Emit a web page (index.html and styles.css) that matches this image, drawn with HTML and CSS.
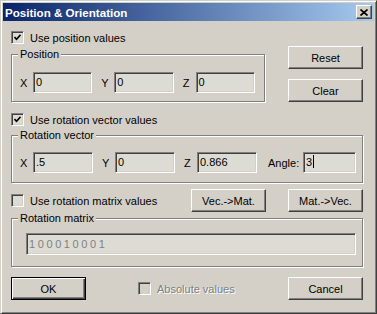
FILE: index.html
```html
<!DOCTYPE html>
<html lang="en">
  <head>
    <meta charset="UTF-8" />
    <title>Position &amp; Orientation</title>
    <link rel="stylesheet" href="styles.css">
  </head>
  <body>
    <div class="window">
      <div class="titlebar">
        <span class="title">Position &amp; Orientation</span>
        <span class="close-btn">
          <svg width="8" height="7" viewBox="0 0 8 7"><path d="M0.5 0.5 L7.5 6.5 M7.5 0.5 L0.5 6.5" stroke="#000" stroke-width="1.7" fill="none"/></svg>
        </span>
      </div>
      <div class="content">
        <div class="top-section">
          <div class="left-col">
            <label class="check">
              <span class="box"><svg width="7" height="7" viewBox="0 0 7 7"><path d="M0.5 3 L2.5 5.2 L6.5 0.8" stroke="#000" stroke-width="1.6" fill="none"/></svg></span>
              Use position values
            </label>
            <div class="group group-pos">
              <span class="legend">Position</span>
              <div class="fields">
                <span class="axis">X</span><span class="field">0</span>
                <span class="axis">Y</span><span class="field">0</span>
                <span class="axis">Z</span><span class="field">0</span>
              </div>
            </div>
          </div>
          <div class="right-col">
            <button class="btn">Reset</button>
            <button class="btn">Clear</button>
          </div>
        </div>

        <label class="check check-vec">
          <span class="box"><svg width="7" height="7" viewBox="0 0 7 7"><path d="M0.5 3 L2.5 5.2 L6.5 0.8" stroke="#000" stroke-width="1.6" fill="none"/></svg></span>
          Use rotation vector values
        </label>
        <div class="group group-vec">
          <span class="legend">Rotation vector</span>
          <div class="fields">
            <span class="axis">X</span><span class="field">.5</span>
            <span class="axis">Y</span><span class="field">0</span>
            <span class="axis">Z</span><span class="field">0.866</span>
            <span class="axis angle">Angle:</span><span class="field field-angle">3<span class="caret"></span></span>
          </div>
        </div>

        <div class="mat-row">
          <label class="check">
            <span class="box"></span>
            Use rotation matrix values
          </label>
          <button class="btn">Vec.-&gt;Mat.</button>
          <button class="btn btn-gap">Mat.-&gt;Vec.</button>
        </div>
        <div class="group group-mat">
          <span class="legend">Rotation matrix</span>
          <div class="field field-mat">100010001</div>
        </div>

        <div class="footer">
          <button class="btn btn-default">OK</button>
          <label class="check disabled">
            <span class="box"></span>
            Absolute values
          </label>
          <button class="btn btn-cancel">Cancel</button>
        </div>
      </div>
    </div>
  </body>
</html>
```

FILE: styles.css
```css
* {
  box-sizing: border-box;
}
body {
  margin: 0;
  background: #d4d0c8;
  font-family: "Liberation Sans", Arial, sans-serif;
  font-size: 11px;
  color: #000;
}
.window {
  width: 377px;
  height: 314px;
  padding: 2px;
  background: #d4d0c8;
  border: 1px solid;
  border-color: #d4d0c8 #404040 #404040 #d4d0c8;
  box-shadow: inset 1px 1px #fff, inset -1px -1px #808080;
}
.titlebar {
  height: 18px;
  display: flex;
  align-items: center;
  justify-content: space-between;
  padding: 0 2px;
  background: linear-gradient(to right, #0a246a, #a6caf0);
  color: #fff;
  font-weight: bold;
}
.title {
  font-size: 11.6px;
}
.close-btn {
  width: 16px;
  height: 14px;
  display: flex;
  align-items: center;
  justify-content: center;
  background: #d4d0c8;
  border: 1px solid;
  border-color: #fff #404040 #404040 #fff;
  box-shadow: inset -1px -1px #808080;
}
.content {
  padding: 10px 0 0 8px;
  width: 360px;
}
.top-section {
  display: flex;
  justify-content: space-between;
  align-items: flex-start;
  width: 352px;
}
.left-col {
  width: 254px;
}
.right-col {
  display: flex;
  flex-direction: column;
  gap: 10px;
  padding-top: 15px;
}
.btn {
  width: 75px;
  height: 23px;
  padding: 0;
  font: inherit;
  color: #000;
  background: #d4d0c8;
  border: 1px solid;
  border-color: #fff #404040 #404040 #fff;
  box-shadow: inset -1px -1px #808080;
}
.btn-default {
  border-color: #000;
  box-shadow: inset 1px 1px #fff, inset -1px -1px #404040, inset -2px -2px #808080;
}
.check {
  display: flex;
  align-items: center;
  height: 13px;
  white-space: nowrap;
}
.box {
  width: 13px;
  height: 13px;
  margin-right: 6px;
  display: flex;
  align-items: center;
  justify-content: center;
  background: #dcdcd4;
  border: 1px solid;
  border-color: #808080 #fff #fff #808080;
  box-shadow: inset 1px 1px #404040, inset -1px -1px #d4d0c8;
}
.disabled {
  color: #808080;
  text-shadow: 1px 1px #fff;
}
.disabled .box {
  background: #d4d0c8;
}
.group {
  position: relative;
  width: 352px;
  border: 1px solid #808080;
  box-shadow: inset 1px 1px #fff, 1px 1px #fff;
}
.legend {
  position: absolute;
  top: -7px;
  left: 6px;
  padding: 0 2px;
  line-height: 13px;
  background: #d4d0c8;
}
.group-pos {
  width: 254px;
  height: 48px;
  margin-top: 10px;
  padding: 17px 0 0 8px;
}
.check-vec {
  margin-top: 11px;
}
.group-vec {
  height: 48px;
  margin-top: 9px;
  padding: 16px 0 0 8px;
}
.fields {
  display: flex;
  align-items: center;
}
.axis {
  width: 13px;
}
.axis.angle {
  width: 35px;
  margin-left: 2px;
}
.field {
  width: 60px;
  height: 21px;
  margin-right: 9px;
  padding-left: 2px;
  line-height: 19px;
  background: #dcdcd4;
  border: 1px solid;
  border-color: #808080 #fff #fff #808080;
  box-shadow: inset 1px 1px #404040, inset -1px -1px #d4d0c8;
  white-space: nowrap;
}
.field-angle {
  width: 53px;
  margin-right: 0;
}
.caret {
  display: inline-block;
  width: 1px;
  height: 13px;
  margin-left: 1px;
  vertical-align: -2px;
  background: #000;
}
.mat-row {
  display: flex;
  align-items: center;
  width: 352px;
  height: 23px;
  margin-top: 6px;
}
.mat-row .check {
  flex: 1;
}
.btn-gap {
  margin-left: 22px;
}
.group-mat {
  height: 49px;
  margin-top: 6px;
  padding: 14px 0 0 14px;
}
.field-mat {
  width: 330px;
  height: 22px;
  margin: 0;
  line-height: 20px;
  color: #808080;
  letter-spacing: 2.6px;
}
.footer {
  display: flex;
  align-items: center;
  width: 352px;
  height: 23px;
  margin-top: 10px;
}
.footer .check {
  margin-left: 52px;
}
.btn-cancel {
  margin-left: auto;
}
```
